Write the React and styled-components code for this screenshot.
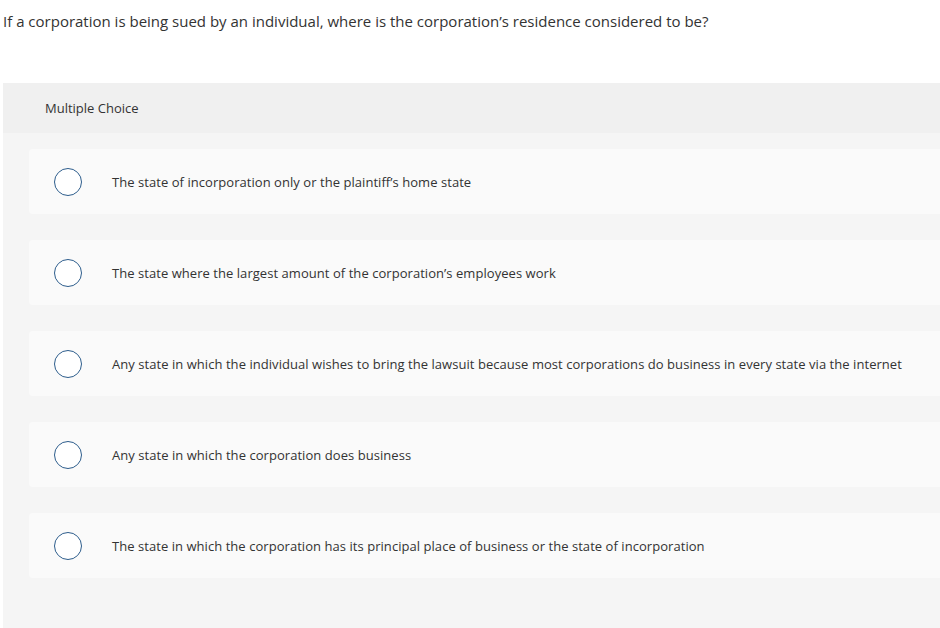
import React from 'react';
import styled, { createGlobalStyle } from 'styled-components';

const GlobalStyle = createGlobalStyle`
  html, body {
    margin: 0;
    padding: 0;
    background: #ffffff;
    font-family: "Open Sans", Lato, sans-serif;
    color: #333333;
  }
`;

const Page = styled.div`
  width: 940px;
  height: 628px;
  overflow: hidden;
`;

const Question = styled.p`
  margin: 0;
  padding: 11px 0 0 3px;
  height: 72px;
  font-size: 15px;
  line-height: 20px;
`;

const Panel = styled.div`
  margin-left: 3px;
  background: #f5f5f5;
  height: 545px;
`;

const PanelHeader = styled.div`
  height: 50px;
  background: #f0f0f0;
  display: flex;
  align-items: center;
  padding-left: 42px;
  font-size: 13px;
`;

const Options = styled.div`
  display: flex;
  flex-direction: column;
  gap: 26px;
  padding: 16px 0 0 26px;
`;

const Option = styled.label`
  display: flex;
  align-items: center;
  height: 65px;
  background: #fafafa;
  border-radius: 4px 0 0 4px;
  font-size: 13px;
  letter-spacing: 0.05px;
  cursor: pointer;
`;

const Radio = styled.span`
  box-sizing: border-box;
  width: 28px;
  height: 28px;
  margin-left: 25px;
  margin-right: 30px;
  border: 1.5px solid #2d5d8c;
  border-radius: 50%;
  background: #ffffff;
  flex-shrink: 0;
`;

const choices = [
  'The state of incorporation only or the plaintiff\u2019s home state',
  'The state where the largest amount of the corporation\u2019s employees work',
  'Any state in which the individual wishes to bring the lawsuit because most corporations do business in every state via the internet',
  'Any state in which the corporation does business',
  'The state in which the corporation has its principal place of business or the state of incorporation',
];

export default function App() {
  return (
    <Page>
      <GlobalStyle />
      <Question>
        If a corporation is being sued by an individual, where is the corporation’s residence considered to be?
      </Question>
      <Panel>
        <PanelHeader>Multiple Choice</PanelHeader>
        <Options>
          {choices.map((c) => (
            <Option key={c}>
              <Radio />
              {c}
            </Option>
          ))}
        </Options>
      </Panel>
    </Page>
  );
}
